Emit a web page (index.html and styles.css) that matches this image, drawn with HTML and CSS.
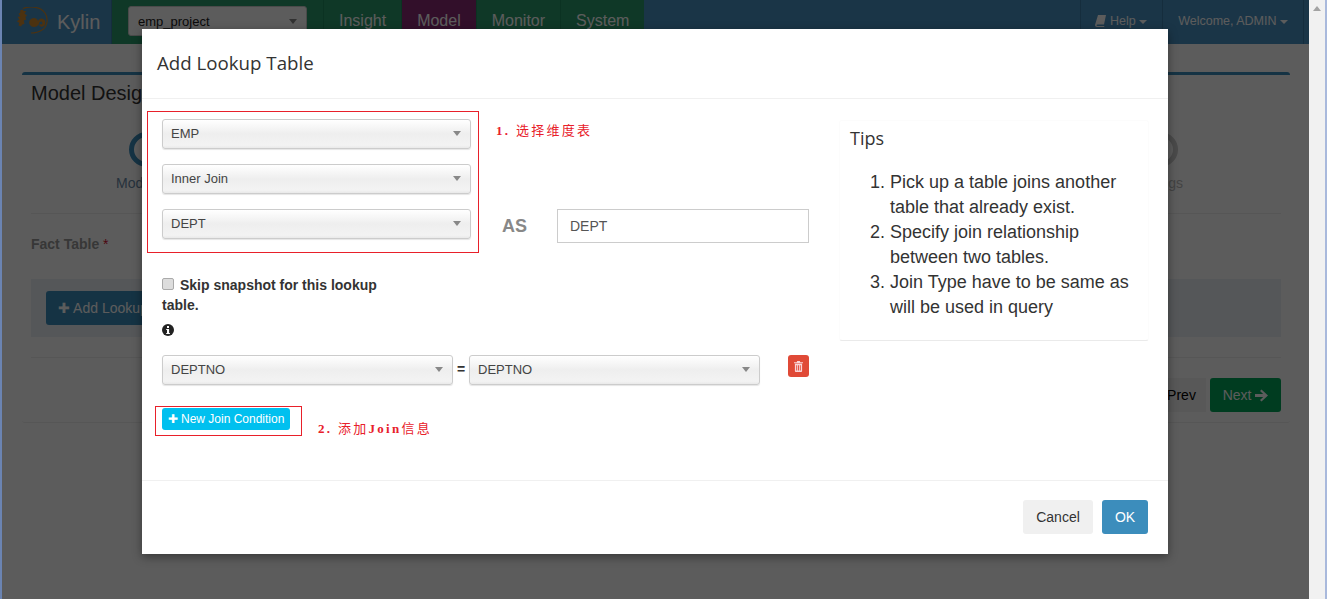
FILE: index.html
```html
<!DOCTYPE html>
<html>
<head>
    <title>Kylin - Add Lookup Table</title>
    <link rel="stylesheet" href="styles.css">
</head>
<body>
    <div class="page">
        <div class="navbar">
            <div class="brand">
                <svg class="logo" width="32" height="30" viewBox="0 0 32 30">
                    <path d="M7 1.500C13 -1 24 -1 29 6c4 6 2 14-3 17-3 2-7 3-11 3" fill="none" stroke="#d28a2e" stroke-width="1.200"/>
                    <path transform="translate(0 -1) scale(.85)" d="M5 5l3-1 1 2 3 0-2 3 3 2-2 2 1 3-3 1 1 4-3 1-1 2-3-1 1-3-3-2 3-2-2-3 3-1-2-3 2-1z" fill="#d28a2e"/>
                    <path transform="translate(0 -2)" d="M14 20c-2-3 0-7 4-7 2 0 3 1 4 3 1-2 3-3 5-2 3 1 3 5 1 7-2 1-4 1-5-1l2-1c1 1 2 0 1-2-1-1-3 0-3 2-1 2-3 3-5 3-2 0-3-1-4-2z" fill="#d28a2e"/>
                </svg>
                <span class="brand-name">Kylin</span>
            </div>
            <div class="project-box">
                <div class="project-select">
                    <span>emp_project</span>
                    <span class="caret-down"></span>
                </div>
            </div>
            <ul class="nav-tabs">
                <li>Insight</li>
                <li class="active">Model</li>
                <li>Monitor</li>
                <li>System</li>
            </ul>
            <ul class="nav-right">
                <li>
                    <svg class="book" width="11" height="12" viewBox="0 0 11 12"><path d="M3 0h8L9 9.500H2.500q-1 0-1 .7t1 .7H9.500L9 12H2q-2 0-2-2z" fill="#fff"/></svg>
                    Help <span class="caret-small"></span>
                </li>
                <li>Welcome, ADMIN <span class="caret-small"></span></li>
            </ul>
        </div>

        <div class="content">
            <div class="panel">
                <h3 class="panel-title">Model Designer</h3>
                <div class="steps">
                    <div class="step">
                        <div class="circle"></div>
                        <div class="step-label">Model Info</div>
                    </div>
                    <div class="step step-off">
                        <div class="circle"></div>
                        <div class="step-label">Settings</div>
                    </div>
                </div>
                <div class="fact-row"><b>Fact Table</b> <span class="required">*</span></div>
                <div class="lookup-well">
                    <button class="btn-add">&#10010; Add Lookup Table</button>
                </div>
                <div class="panel-actions">
                    <button class="btn-prev">Prev</button>
                    <button class="btn-next">Next
                        <svg width="13" height="13" viewBox="0 0 13 13"><path d="M6.500 0.500L13 6.500l-6.500 6-1.500-1.500 3.200-3H0V5h8.200L5 2z" fill="#fff"/></svg>
                    </button>
                </div>
            </div>
        </div>

        <div class="backdrop"></div>

        <div class="modal">
            <div class="modal-header">Add Lookup Table</div>
            <div class="modal-body">
                <div class="form-side">
                    <div class="top-row">
                        <div class="red-box select-box">
                            <div class="select">EMP<span class="caret-down"></span></div>
                            <div class="select">Inner Join<span class="caret-down"></span></div>
                            <div class="select">DEPT<span class="caret-down"></span></div>
                        </div>
                        <div class="top-side">
                            <div class="note"><b>1.</b> 选择维度表</div>
                            <div class="as-row">
                                <b class="as-label">AS</b>
                                <div class="as-input">DEPT</div>
                            </div>
                        </div>
                    </div>
                    <div class="skip">
                        <span class="checkbox"></span><b>Skip snapshot for this lookup table.</b>
                    </div>
                    <svg class="info-icon" width="12" height="12" viewBox="0 0 12 12">
                        <circle cx="6" cy="6" r="6" fill="#222"/>
                        <rect x="5" y="2" width="2" height="2" fill="#fff"/>
                        <path d="M4.200 5h2.900v4h.8v1H4.200V9H5V6h-.8z" fill="#fff"/>
                    </svg>
                    <div class="join-row">
                        <div class="select join-select">DEPTNO<span class="caret-down"></span></div>
                        <b class="equals">=</b>
                        <div class="select join-select right">DEPTNO<span class="caret-down"></span></div>
                        <button class="btn-delete">
                            <svg width="9" height="11" viewBox="0 0 10 12"><path d="M3.500 0h3l.5 1.200h3v1.200H0V1.200h3zM1 3h8v8q0 1-1 1H2q-1 0-1-1zm1.500 1.500v6h1v-6zm2 0v6h1v-6zm2 0v6h1v-6z" fill="#f9d5d8"/></svg>
                        </button>
                    </div>
                    <div class="condition-row">
                        <div class="red-box condition-box">
                            <button class="btn-new">&#10010; New Join Condition</button>
                        </div>
                        <div class="note note-two"><b>2.</b> 添加<b>Join</b>信息</div>
                    </div>
                </div>
                <div class="tips">
                    <h4>Tips</h4>
                    <ol>
                        <li>Pick up a table joins another table that already exist.</li>
                        <li>Specify join relationship between two tables.</li>
                        <li>Join Type have to be same as will be used in query</li>
                    </ol>
                </div>
            </div>
            <div class="modal-footer">
                <button class="btn-cancel">Cancel</button>
                <button class="btn-ok">OK</button>
            </div>
        </div>

        <div class="scrollbar"><span class="scroll-up"></span></div>
    </div>
</body>
</html>
```

FILE: styles.css
```css
* {
    box-sizing: border-box;
}

html, body {
    margin: 0;
    height: 100%;
    overflow: hidden;
}

body {
    font-family: "Liberation Sans", Arial, sans-serif;
    font-size: 14px;
    color: #333;
    background-color: #fff;
}

ul {
    list-style-type: none;
    margin: 0;
    padding: 0;
}

button {
    font-family: inherit;
    border: none;
}

.page {
    position: relative;
    width: 1327px;
    height: 599px;
    overflow: hidden;
}

/* window edge on the left of the capture */
.page::after {
    content: "";
    position: absolute;
    left: 0;
    top: 0;
    width: 2px;
    height: 599px;
    background-color: #6b84b2;
}

/* top bar */
.navbar {
    display: flex;
    width: 1309px;
    height: 44px;
    background-color: #4a93c4;
}

.brand {
    display: flex;
    align-items: center;
    gap: 9px;
    width: 112px;
    padding-left: 16px;
    flex: none;
    border-right: 1px solid #3a7da8;
}

.brand-name {
    font-size: 20px;
    color: #fff;
}

.project-box {
    width: 211px;
    flex: none;
    padding: 6px 0 0 16px;
    background-color: #2a9c6e;
}

.project-select {
    display: flex;
    justify-content: space-between;
    align-items: center;
    width: 179px;
    height: 30px;
    padding: 0 9px;
    font-size: 13px;
    background-color: #fff;
    border: 1px solid #ccc;
    border-radius: 3px;
    color: #222;
}

.nav-tabs {
    display: flex;
    background-color: #2a9c6e;
}

.nav-tabs li {
    padding: 12px 15px 0;
    font-size: 16px;
    color: #fff;
    border-left: 1px solid #1f8a5e;
}

.nav-tabs li.active {
    background-color: #8c2c74;
}

.nav-right {
    display: flex;
    margin-left: auto;
    padding-right: 5px;
}

.nav-right li {
    padding: 14px 15px 0 14px;
    font-size: 12.500px;
    color: #fff;
    border-left: 1px solid #3a7da8;
}

.nav-right li:last-child {
    padding-left: 15px;
    border-right: 1px solid #3a7da8;
}

.book {
    vertical-align: -2px;
}

/* page behind the dialog */
.content {
    width: 1309px;
    padding: 28px 19px 0 22px;
}

.panel {
    padding-bottom: 10px;
    border-top: 3px solid #3c8dbc;
    border-bottom: 1px solid #eee;
    border-radius: 3px;
}

.panel-title {
    margin: 0;
    padding: 7px 9px;
    font-size: 20px;
    font-weight: normal;
    height: 33px;
}

.steps {
    display: flex;
    justify-content: space-between;
    height: 106px;
    padding: 0 98px 0 85px;
    margin: 0 9px;
    border-bottom: 1px solid #eee;
}

.circle {
    width: 35px;
    height: 35px;
    margin: 24px 0 0 13px;
    border: 5px solid #3c8dbc;
    border-radius: 50%;
}

.step-off .circle {
    margin-left: 11px;
    border-color: #ccc;
}

.step-label {
    margin-top: 8px;
    font-size: 14px;
    color: #6a8aa8;
}

.step-off .step-label {
    color: #bbb;
}

.fact-row {
    height: 65px;
    padding: 22px 9px 0;
    font-size: 14px;
}

.fact-row b {
    color: #999;
}

.required {
    color: #d41030;
}

.lookup-well {
    height: 58px;
    margin: 0 9px;
    padding: 12px 15px;
    background-color: #ecf0f5;
}

.btn-add {
    height: 34px;
    padding: 0 12px;
    font-size: 14px;
    color: #fff;
    background-color: #3c8dbc;
    border-radius: 3px;
}

.panel-actions {
    display: flex;
    justify-content: flex-end;
    gap: 4px;
    margin: 20px 9px 0;
    padding-top: 20px;
    border-top: 1px solid #eee;
}

.btn-prev {
    width: 78px;
    height: 34px;
    padding-left: 35px;
    font-size: 14px;
    color: #000;
    background-color: #f4f4f4;
}

.btn-next {
    width: 71px;
    height: 34px;
    font-size: 14px;
    color: #fff;
    background-color: #00a65a;
    border-radius: 3px;
}

.btn-next svg {
    vertical-align: -2px;
}

/* dialog */
.backdrop {
    position: absolute;
    left: 0;
    top: 0;
    width: 1309px;
    height: 599px;
    background-color: rgba(0, 0, 0, 0.64);
}

.modal {
    position: absolute;
    left: 142px;
    top: 29px;
    width: 1026px;
    height: 525px;
    background-color: #fff;
    display: flex;
    flex-direction: column;
    box-shadow: 0 3px 9px rgba(0, 0, 0, 0.4);
}

.modal-header {
    height: 70px;
    padding: 24px 15px 0;
    font-family: "Open Sans", sans-serif;
    font-size: 18.700px;
    line-height: 20px;
    color: #333;
    border-bottom: 1px solid #f0f0f0;
}

.modal-body {
    display: flex;
    flex: 1;
}

.form-side {
    width: 697px;
    flex: none;
    padding: 12px 0 0 5px;
}

.top-row {
    display: flex;
}

.red-box {
    border: 1px solid #e8202a;
}

.select-box {
    width: 332px;
    height: 142px;
    padding: 7px 7px 0 14px;
    flex: none;
}

.select {
    position: relative;
    height: 30px;
    margin-bottom: 15px;
    padding-left: 8px;
    font-size: 13px;
    line-height: 28px;
    color: #444;
    background: linear-gradient(#fff 0, #eee 50%, #f3f3f3 90%, #e9e9e9 100%);
    border: 1px solid #ccc;
    border-radius: 3px;
    box-shadow: 0 1px 1px rgba(0, 0, 0, 0.1);
}

.caret-down {
    width: 0;
    height: 0;
    border-left: 4px solid transparent;
    border-right: 4px solid transparent;
    border-top: 5px solid #888;
}

.select .caret-down {
    position: absolute;
    right: 9px;
    top: 11px;
}

.caret-small {
    display: inline-block;
    vertical-align: middle;
    border-left: 4px solid transparent;
    border-right: 4px solid transparent;
    border-top: 4px solid #fff;
}

.top-side {
    flex: 1;
    padding: 10px 0 0 17px;
}

.note {
    font-family: "Liberation Serif", "Noto Sans CJK SC", serif;
    font-size: 13px;
    line-height: 20px;
    color: #e8202a;
    letter-spacing: 2.300px;
}

.as-row {
    display: flex;
    align-items: center;
    margin-top: 68px;
}

.as-label {
    width: 55px;
    margin-left: 6px;
    font-size: 18px;
    color: #888;
}

.as-input {
    width: 252px;
    height: 34px;
    padding-left: 12px;
    font-size: 14px;
    line-height: 32px;
    color: #555;
    border: 1px solid #ccc;
}

.skip {
    width: 232px;
    margin: 22px 0 0 15px;
    font-size: 14px;
    line-height: 20px;
}

.checkbox {
    display: inline-block;
    width: 12px;
    height: 12px;
    margin-right: 6px;
    background-color: #ddd;
    border: 1px solid #aaa;
    border-radius: 2px;
}

.info-icon {
    display: block;
    margin: 9px 0 0 15px;
}

.join-row {
    display: flex;
    align-items: flex-start;
    margin: 19px 0 0 15px;
}

.join-select {
    width: 291px;
    margin-bottom: 0;
}

.join-select.right {
    margin-right: 28px;
}

.equals {
    width: 16px;
    font-size: 14px;
    line-height: 28px;
    text-align: center;
}

.btn-delete {
    display: flex;
    align-items: center;
    justify-content: center;
    width: 21px;
    height: 22px;
    padding: 0;
    background-color: #e04a37;
    border-radius: 3px;
}

.condition-row {
    display: flex;
    align-items: flex-end;
    margin-top: 21px;
}

.condition-box {
    width: 147px;
    height: 30px;
    margin-left: 8px;
    padding: 1px 6px;
    flex: none;
}

.btn-new {
    display: block;
    height: 22px;
    width: 128px;
    padding: 0;
    font-size: 12px;
    color: #fff;
    background-color: #00c0ef;
    border-radius: 3px;
}

.note-two {
    margin: 0 0 -3px 16px;
}

.tips {
    width: 310px;
    height: 221px;
    margin-top: 21px;
    border: 1px solid #fcfcfc;
    border-bottom-color: #eaeaea;
    border-radius: 3px;
}

.tips h4 {
    margin: 5px 0 0 10px;
    font-family: "Open Sans", sans-serif;
    font-size: 18px;
    line-height: 24px;
    font-weight: normal;
}

.tips ol {
    margin: 20px 0 0;
    padding-left: 50px;
    font-size: 18px;
    line-height: 25px;
}

.modal-footer {
    display: flex;
    justify-content: flex-end;
    gap: 9px;
    height: 74px;
    padding: 19px 20px 0 0;
    border-top: 1px solid #f0f0f0;
}

.btn-cancel {
    width: 70px;
    height: 34px;
    font-size: 14px;
    color: #333;
    background-color: #f0f0f0;
    border-radius: 3px;
}

.btn-ok {
    width: 46px;
    height: 34px;
    font-size: 14px;
    color: #fff;
    background-color: #3c8dbc;
    border-radius: 3px;
}

/* browser scrollbar */
.scrollbar {
    position: absolute;
    right: 0;
    top: 0;
    width: 18px;
    height: 599px;
    background-color: #f1f1f1;
    border-right: 2px solid #a9b9dc;
}

.scroll-up {
    position: absolute;
    left: 4px;
    top: 6px;
    border-left: 4px solid transparent;
    border-right: 4px solid transparent;
    border-bottom: 5px solid #a3a3a3;
}
```
